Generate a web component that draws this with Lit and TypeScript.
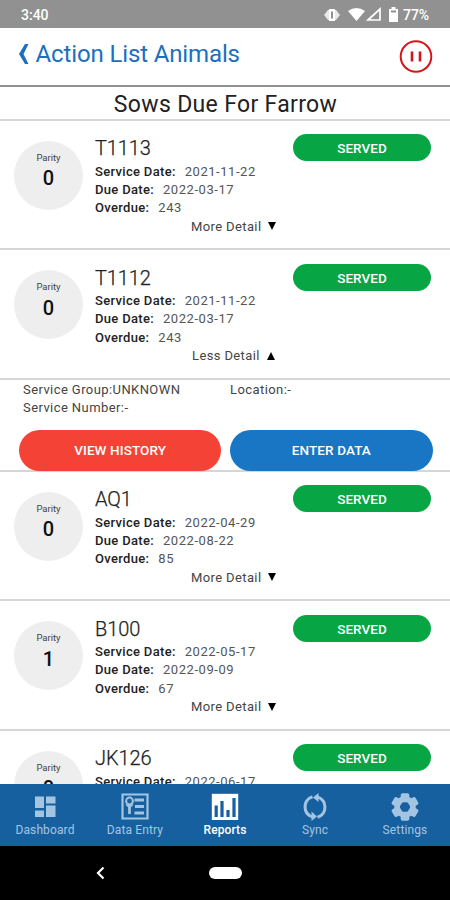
import { LitElement, html, css, svg, nothing } from "lit";
import { customElement, property } from "lit/decorators.js";

interface Animal {
  id: string;
  parity: number;
  service: string;
  due: string;
  overdue: string;
  open?: boolean;
}

const animals: Animal[] = [
  { id: "T1113", parity: 0, service: "2021-11-22", due: "2022-03-17", overdue: "243" },
  { id: "T1112", parity: 0, service: "2021-11-22", due: "2022-03-17", overdue: "243", open: true },
  { id: "AQ1", parity: 0, service: "2022-04-29", due: "2022-08-22", overdue: "85" },
  { id: "B100", parity: 1, service: "2022-05-17", due: "2022-09-09", overdue: "67" },
  { id: "JK126", parity: 0, service: "2022-06-17", due: "2022-10-10", overdue: "36" },
];

@customElement("animal-row")
export class AnimalRow extends LitElement {
  @property({ attribute: false }) animal!: Animal;

  static styles = css`
    :host { display: block; flex: none; }
    .row { box-sizing: border-box; height: 129.5px; display: flex; align-items: flex-start; border-bottom: 2px solid #d6d6d6; padding: 0 19px 0 14px; }
    .parity { flex: none; width: 69px; height: 69px; margin-top: 20px; border-radius: 50%; background: #eee; display: flex; flex-direction: column; align-items: center; box-sizing: border-box; padding-top: 11px; }
    .parity small { font-size: 9.5px; line-height: 12px; color: #444; }
    .parity b { font-size: 20px; line-height: 24px; margin-top: 2.5px; font-weight: 500; color: #111; }
    .info { flex: none; margin-left: 12px; width: 190px; padding-top: 14.5px; }
    .id { font-size: 20px; line-height: 26px; color: #222; letter-spacing: -0.1px; margin-bottom: 1.5px; font-weight: 300; -webkit-text-stroke: 0.25px #222; }
    .line { display: flex; gap: 9px; font-size: 13px; line-height: 18.4px; color: #555; letter-spacing: 0.55px; white-space: nowrap; }
    .line span:first-child { color: #222; font-weight: 500; letter-spacing: 0.32px; }
    .toggle { display: flex; align-items: center; gap: 7px; margin-left: 96px; font-size: 13px; line-height: 18.4px; letter-spacing: 0.38px; color: #444; white-space: nowrap; }
    .toggle.open { margin-left: 97px; }
    .toggle svg { margin-top: -2px; }
    .badge { flex: none; margin-left: auto; margin-top: 13.5px; width: 138px; height: 27px; border-radius: 14px; background: #08a545; color: #fff; font-size: 13.5px; font-weight: 500; line-height: 28px; text-align: center; letter-spacing: 0.05px; }
    .detail { box-sizing: border-box; height: 92px; border-bottom: 2px solid #d6d6d6; padding: 1.2px 17.5px 0 19px; display: flex; flex-direction: column; justify-content: space-between; }
    .facts { display: grid; grid-template-columns: 207px 1fr; padding-left: 4px; font-size: 13px; line-height: 18.4px; color: #444; letter-spacing: 0.42px; }
    .actions { display: grid; grid-template-columns: 1fr 1fr; gap: 9px; margin-bottom: -1px; }
    .btn { height: 41px; border-radius: 21px; color: #fff; font-size: 13.5px; font-weight: 500; line-height: 41px; text-align: center; letter-spacing: 0.1px; }
    .red { background: #f44336; }
    .blue { background: #1976c5; }
  `;

  render() {
    const a = this.animal;
    return html`
      <div class="row">
        <div class="parity"><small>Parity</small><b>${a.parity}</b></div>
        <div class="info">
          <div class="id">${a.id}</div>
          <div class="line"><span>Service Date:</span><span>${a.service}</span></div>
          <div class="line"><span>Due Date:</span><span>${a.due}</span></div>
          <div class="line"><span>Overdue:</span><span>${a.overdue}</span></div>
          <div class="toggle ${a.open ? "open" : ""}">${a.open ? "Less Detail" : "More Detail"}
            <svg width="8" height="9" viewBox="0 0 8 9"><path d=${a.open ? "M0 9h8L4 1z" : "M0 1h8L4 9z"} fill="#000" /></svg>
          </div>
        </div>
        <div class="badge">SERVED</div>
      </div>
      ${a.open
        ? html`<div class="detail">
            <div class="facts"><span>Service Group:UNKNOWN</span><span>Location:-</span><span>Service Number:-</span></div>
            <div class="actions"><div class="btn red">VIEW HISTORY</div><div class="btn blue">ENTER DATA</div></div>
          </div>`
        : nothing}
    `;
  }
}

const gearTeeth = [0, 60, 120, 180, 240, 300];

const tabs = [
  { label: "Dashboard", icon: svg`<path d="M4 3.5h9v11.500h-9zM15 3.500h9.500v7h-9.500zM4 17.500h9v6.500h-9zM15 12.500h9.500v11.500h-9.500z" fill="currentColor"/>` },
  { label: "Data Entry", icon: svg`<g fill="none" stroke="currentColor"><path d="M1.500 1.500h25v24h-25z" stroke-width="2.200"/><circle cx="8.500" cy="8" r="3.400" stroke-width="2"/><path d="M8.500 11v10M13.500 7h9.500M14 13.500h9M13.500 20h9.500" stroke-width="2.800"/><path d="M5 11.500l3.500 3 3.500-3" stroke-width="1.500"/></g>` },
  { label: "Reports", on: true, icon: svg`<path d="M.8 .8h26.400v26.200H.8z" fill="currentColor"/><path d="M5.200 24v-11.500M11 24v-16M17 24v-7M23 24V5" stroke="#1660a0" stroke-width="3.200"/>` },
  { label: "Sync", icon: svg`<g fill="none" stroke="currentColor" stroke-width="3"><path d="M10 23.500A10.800 10.800 0 0 1 9.500 4.500M18 4.500A10.800 10.800 0 0 1 18.500 23.500M18 4.500L15.500 4M10 23.500l2.500.5M9.500 4.500l2-.7M18.500 23.500l-2 .7"/></g><path d="M10.500 18.500v9.500l5.500-4.500zM17.500 0v9L12 4.500z" fill="currentColor"/>` },
  { label: "Settings", icon: svg`${gearTeeth.map((r) => svg`<rect x="9.700" y="0.300" width="8.600" height="9" rx="1.800" fill="currentColor" transform="rotate(${r} 14 14)"/>`)}<circle cx="14" cy="14" r="8" fill="none" stroke="currentColor" stroke-width="5.500"/>` },
];

@customElement("app-root")
export class AppRoot extends LitElement {
  static styles = css`
    :host { display: flex; flex-direction: column; width: 450px; height: 900px; overflow: hidden; background: #fff; font-family: Roboto, "Liberation Sans", sans-serif; }
    .status { flex: none; height: 28px; box-sizing: border-box; background: #919191; color: #fff; display: flex; align-items: center; padding: 1px 21px 0 21px; font-size: 14px; font-weight: 500; justify-content: space-between; }
    .status div { display: flex; align-items: center; letter-spacing: -0.1px; }
    .head { flex: none; height: 58.500px; box-sizing: border-box; border-bottom: 2px solid #919191; display: flex; align-items: center; justify-content: space-between; padding: 0 17px 0 18px; }
    .back { display: flex; align-items: center; gap: 6.500px; color: #1c6fc0; font-size: 24px; letter-spacing: -0.130px; margin-top: -5px; }
    .title { flex: none; height: 34px; box-sizing: border-box; border-bottom: 2px solid #d6d6d6; text-align: center; font-size: 23px; line-height: 35px; color: #222; letter-spacing: 0.330px; padding-left: 1px; }
    .list { flex: 1; min-height: 0; overflow: hidden; display: flex; flex-direction: column; }
    .tabs { flex: none; height: 62px; background: #1660a0; display: grid; grid-template-columns: repeat(5, 90px); }
    .tab { display: flex; flex-direction: column; align-items: center; padding-top: 9px; font-size: 12px; line-height: 15px; letter-spacing: 0.120px; color: #a4c5e2; gap: 2px; }
    .tab.on { color: #fff; font-weight: 500; }
    .sys { flex: none; height: 54px; background: #000; display: grid; grid-template-columns: 96px 1fr 96px; align-items: center; }
    .sys svg { justify-self: end; margin-right: -10.500px; }
    .pill { justify-self: center; width: 33px; height: 12px; border-radius: 6px; background: #fff; }
  `;

  render() {
    return html`
      <div class="status">
        <span>3:40</span>
        <div>
          <svg width="80" height="18" viewBox="0 0 80 18" fill="#fff">
            <path d="M5 4h8l4 5-4 5H5L1 9z" opacity=".8"/><path d="M6 3h6v12H6z"/><path d="M9 5.500v7" stroke="#919191" stroke-width="2"/>
            <path d="M25 5q8.500-6 17 0l-8.500 10z"/>
            <path d="M57 3v11H45z" fill="none" stroke="#fff" stroke-width="1.700"/>
            <path d="M66 3h2.500V1h4v2H75v13h-9z"/><path d="M68 4.500h5v2h-5z" fill="#919191"/>
          </svg>
          <span>77%</span>
        </div>
      </div>
      <div class="head">
        <div class="back">
          <svg width="11" height="22" viewBox="0 0 11 22"><path d="M10.500 1H7L1 11l6 10h3.500L5.500 11z" fill="currentColor"/></svg>
          <span>Action List Animals</span>
        </div>
        <svg width="34" height="34" viewBox="0 0 34 34" fill="none" stroke="#d5141b"><circle cx="17" cy="17.500" r="15.300" stroke-width="2"/><path d="M13 12.500v10M21 12.500v10" stroke-width="2.600"/></svg>
      </div>
      <div class="title">Sows Due For Farrow</div>
      <div class="list">${animals.map((a) => html`<animal-row .animal=${a}></animal-row>`)}</div>
      <div class="tabs">
        ${tabs.map((t) => html`<div class="tab ${t.on ? "on" : ""}"><svg width="28" height="28" viewBox="0 0 28 28">${t.icon}</svg><span>${t.label}</span></div>`)}
      </div>
      <div class="sys">
        <svg width="12" height="14" viewBox="0 0 12 14"><path d="M8.500 1.500L3 7l5.500 5.500" fill="none" stroke="#fff" stroke-width="2.200"/></svg>
        <div class="pill"></div>
      </div>
    `;
  }
}
